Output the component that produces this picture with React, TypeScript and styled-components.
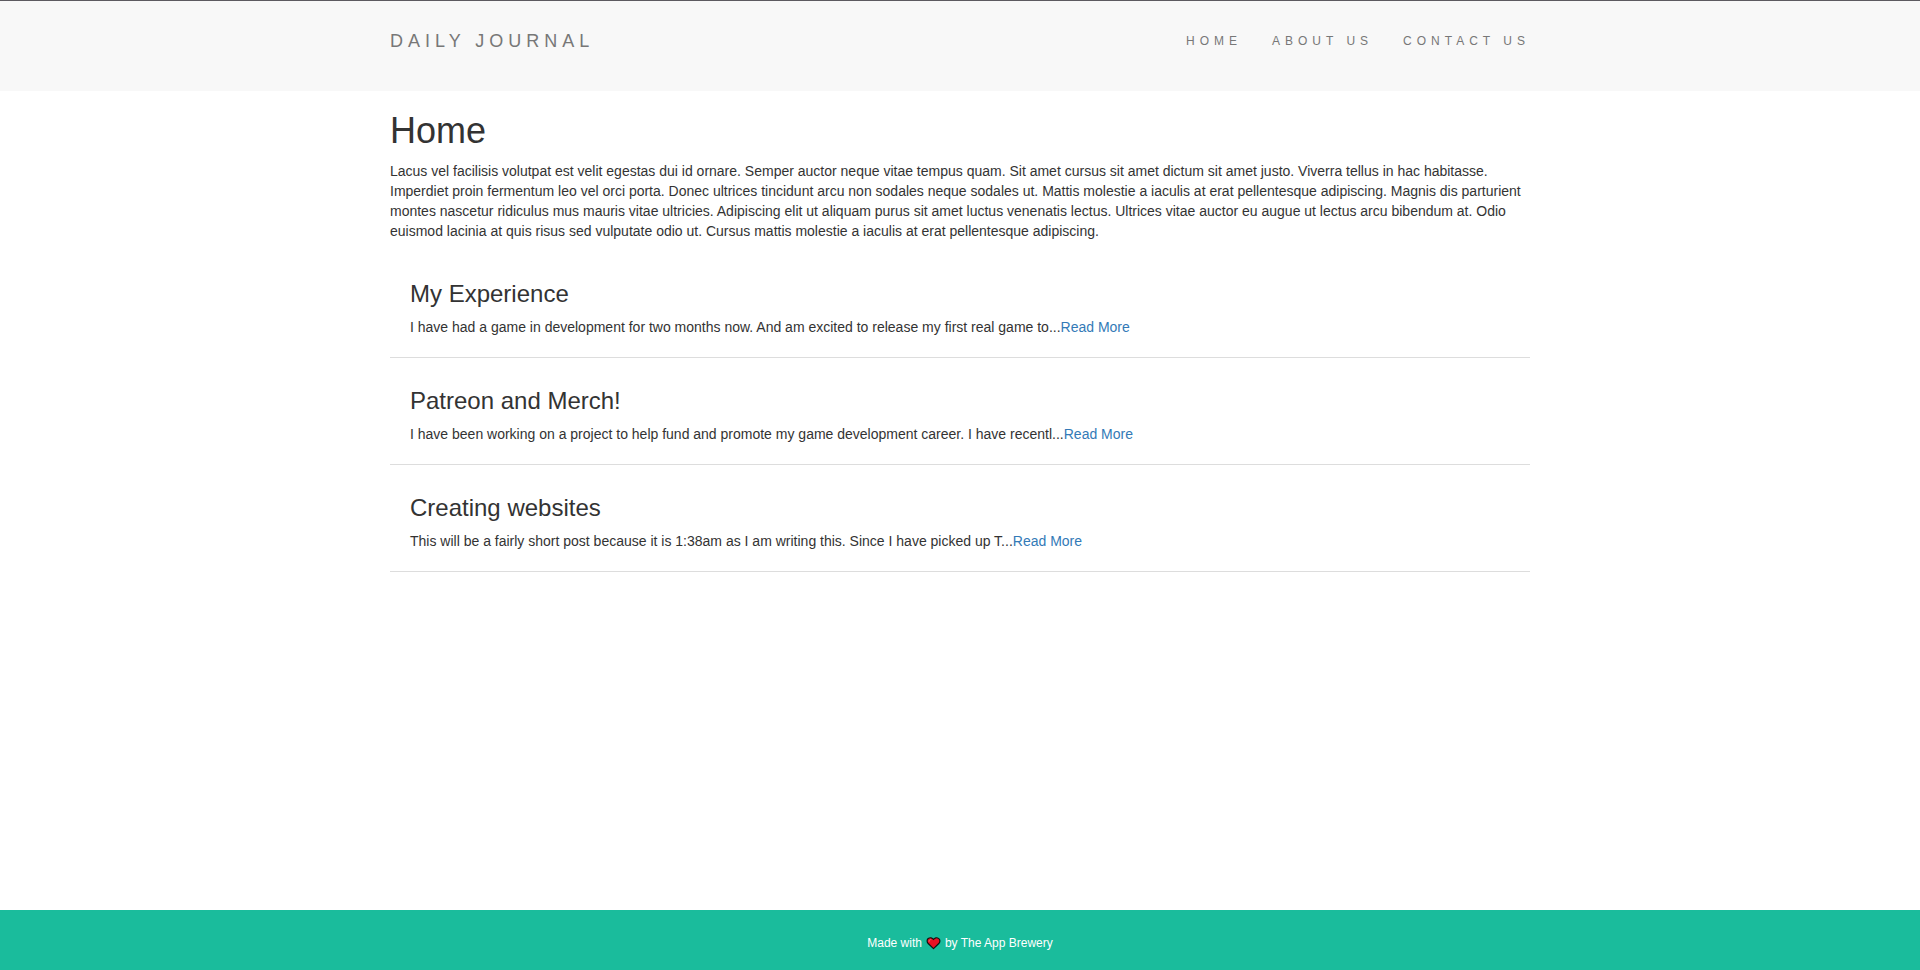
import React from "react";
import styled, { createGlobalStyle } from "styled-components";

const GlobalStyle = createGlobalStyle`
  *, *::before, *::after { box-sizing: border-box; }
  body {
    margin: 0;
    font-family: "Liberation Sans", Arial, sans-serif;
    font-size: 14px;
    line-height: 20px;
    color: #333;
    background: #fff;
  }
`;

const Page = styled.div`
  display: flex;
  flex-direction: column;
  min-height: 100vh;
`;

const Container = styled.div`
  width: 100%;
  max-width: 1170px;
  margin: 0 auto;
  padding: 0 15px;
`;

const Header = styled.header`
  border-top: 1px solid #5d5a60;
  padding: 30px 0 40px;
  background: #f8f8f8;
`;

const HeaderRow = styled(Container)`
  display: flex;
  justify-content: space-between;
`;

const Brand = styled.a`
  font-size: 18px;
  letter-spacing: 5px;
  color: #777;
  text-decoration: none;
`;

const NavList = styled.ul`
  display: flex;
  gap: 30px;
  margin: 0;
  padding: 0;
  list-style: none;
  font-size: 12px;
`;

const NavLink = styled.a`
  letter-spacing: 5px;
  color: #777;
  text-decoration: none;
`;

const Main = styled(Container).attrs({ as: "main" })`
  flex: 1;
`;

const Title = styled.h1`
  margin: 20px 0 10px;
  font-size: 36px;
  font-weight: 500;
  line-height: 40px;
`;

const Intro = styled.p`
  margin: 0 0 10px;
`;

const Post = styled.article`
  padding: 20px;
  border-bottom: 1px solid #ddd;
`;

const PostTitle = styled.h2`
  margin: 10px 0;
  font-size: 24px;
  font-weight: 500;
  line-height: 26px;
`;

const PostText = styled.p`
  margin: 0;
`;

const ReadMore = styled.a`
  color: #337ab7;
  text-decoration: none;
`;

const Footer = styled.footer`
  display: flex;
  justify-content: center;
  gap: 4px;
  padding: 23px 0 17px;
  background: #1abc9c;
  color: #fff;
  font-size: 12px;
`;

const HeartIcon = styled.svg`
  display: block;
  width: 15px;
  height: 20px;
`;

const posts = [
  {
    title: "My Experience",
    text: "I have had a game in development for two months now. And am excited to release my first real game to...",
  },
  {
    title: "Patreon and Merch!",
    text: "I have been working on a project to help fund and promote my game development career. I have recentl...",
  },
  {
    title: "Creating websites",
    text: "This will be a fairly short post because it is 1:38am as I am writing this. Since I have picked up T...",
  },
];

function Heart() {
  return (
    <HeartIcon viewBox="0 0 15 20" role="img" aria-label="love">
      <path
        d="M7.5 15.6 L1.9 10.2 C0.7 8.8 0.9 6.6 2.2 5.6 C4 4.2 6.4 4.6 7.5 6.5 C8.6 4.6 11 4.2 12.8 5.6 C14.1 6.6 14.3 8.8 13.1 10.2 Z"
        fill="#e81224"
        stroke="#111"
        strokeWidth="1.2"
        strokeLinejoin="round"
      />
      <path d="M3 8.4 C3 7.2 3.8 6.5 4.9 6.6" fill="none" stroke="#f4606c" strokeWidth="1" strokeLinecap="round" />
    </HeartIcon>
  );
}

export default function App() {
  return (
    <Page>
      <GlobalStyle />
      <Header>
        <HeaderRow>
          <Brand href="#">DAILY JOURNAL</Brand>
          <nav>
            <NavList>
              {["HOME", "ABOUT US", "CONTACT US"].map((label) => (
                <li key={label}>
                  <NavLink href="#">{label}</NavLink>
                </li>
              ))}
            </NavList>
          </nav>
        </HeaderRow>
      </Header>
      <Main>
        <Title>Home</Title>
        <Intro>
          Lacus vel facilisis volutpat est velit egestas dui id ornare. Semper auctor neque vitae tempus quam. Sit amet
          cursus sit amet dictum sit amet justo. Viverra tellus in hac habitasse. Imperdiet proin fermentum leo vel orci
          porta. Donec ultrices tincidunt arcu non sodales neque sodales ut. Mattis molestie a iaculis at erat
          pellentesque adipiscing. Magnis dis parturient montes nascetur ridiculus mus mauris vitae ultricies. Adipiscing
          elit ut aliquam purus sit amet luctus venenatis lectus. Ultrices vitae auctor eu augue ut lectus arcu bibendum
          at. Odio euismod lacinia at quis risus sed vulputate odio ut. Cursus mattis molestie a iaculis at erat
          pellentesque adipiscing.
        </Intro>
        {posts.map((post) => (
          <Post key={post.title}>
            <PostTitle>{post.title}</PostTitle>
            <PostText>
              {post.text}
              <ReadMore href="#">Read More</ReadMore>
            </PostText>
          </Post>
        ))}
      </Main>
      <Footer>
        <span>Made with</span>
        <Heart />
        <span>by The App Brewery</span>
      </Footer>
    </Page>
  );
}
